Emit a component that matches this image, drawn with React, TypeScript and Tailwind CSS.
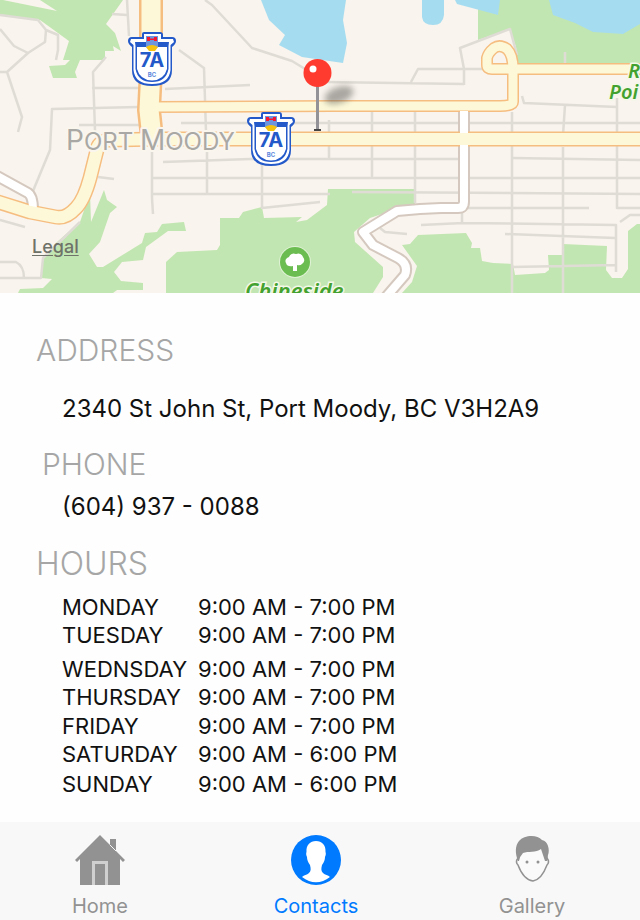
import React from 'react';

const land = '#f9f4ed';
const park = '#c2e6b1';
const water = '#a6dcf0';

function Shield({ x, y }: { x: number; y: number }) {
  const outline =
    'M14 2 Q14 0 16 0 H32 Q35 0 35 3 V5 H44 Q48 5 48 9 Q48 12 44 15 V38 Q44 54 24 54 Q4 54 4 38 V15 Q0 12 0 9 Q0 5 4 5 H14 Z';
  return (
    <g transform={`translate(${x} ${y})`}>
      <path d={outline} fill="#2359c9" />
      <path
        d="M16 2 H33 V7 H45 L46 10 L42.500 13 V38 Q41 52 24 52 Q7 52 5.500 38 V13 L2 10 L3 7 H16 Z"
        fill="#fff"
      />
      <path d="M7 10 H41 L40.500 14 V37 Q38 50 24 50 Q10 50 7.500 37 V14 Z" fill="#2359c9" />
      <path d="M9 15 H39 V37 Q36 48 24 48.500 Q12 48 9 37 Z" fill="#fff" />
      <path d="M18 4 H30 V15 Q24 21 18 15 Z" fill="#6d96df" />
      <path d="M19 5 H22 V9 H19 Z M26 5 H29 V9 H26 Z M22 6.500 H26 V8 H22 Z" fill="#f5162f" />
      <path d="M18 15 Q24 11 30 15 L27 19 H21 Z" fill="#f5c20f" />
      <text x="24" y="35" textAnchor="middle" fontSize="20" fontWeight="700" fill="#2359c9">
        7A
      </text>
      <text x="24" y="45" textAnchor="middle" fontSize="6" fontWeight="700" fill="#5d87dc">
        BC
      </text>
    </g>
  );
}

function CityMap() {
  const majorRoads = [
    'M151 -10 V70 L149 110 L152 138',
    'M154 107 L330 106 H500 Q513 106 513 102 V69',
    'M650 69 H492 Q487 69 487 65 V58 Q488 53 494 48 Q500 44 507 49 Q513 55 513 69',
    'M650 139 H160 L108 140 Q98 142 97 150 L90 178 Q84 200 76 208 Q66 219 56 217 L30 212 L-5 201',
  ];
  const widths = [24, 12, 12, 15];
  const fills = [19, 9, 9, 12];
  const whiteRoads = [
    'M464 111 V202 Q464 208 458 208 H441 L420 209 L397 211 L363 232 L373 245 L398 258 Q409 264 405 275 L386 297',
    'M-3 176 L28 193 Q33 196 33 210',
  ];
  return (
    <svg
      className="block h-[293px] w-full"
      viewBox="0 0 640 293"
      preserveAspectRatio="xMidYMid slice"
      fontFamily='Inter, "Liberation Sans", sans-serif'
      role="img"
      aria-label="Map of Port Moody"
    >
      <defs>
        <filter id="soft" x="-50%" y="-50%" width="200%" height="200%">
          <feGaussianBlur stdDeviation="3" />
        </filter>
      </defs>
      <rect width="640" height="293" fill={land} />
      <g fill={park}>
        <path d="M0 0 H3 L57 11 L40 0 H123 L106 24 L115 33 L121 51 L113 46 L114 51 L105 51 V60 H80 L75 72 L77 78 H53 L49 66 L65 65 L70 60 H63 L69 41 L40 20 L0 15 Z" />
        <path d="M90 193 L91 222 L104 190 L107 200 L117 207 L110 213 L100 242 L89 254 L97 267 H103 L142 243 L145 233 L157 232 L162 224 L184 222 L186 231 H168 L146 247 L143 260 L122 262 L114 272 L121 281 L143 283 V290 H117 L113 293 H18 L20 289 L43 288 L52 279 L41 278 L43 258 L57 242 L80 222 Z" />
        <path d="M166 293 V262 L177 252 L217 250 L220 245 V218 H239 L243 212 L262 207 L264 218 L302 217 L296 222 L307 220 L327 205 L328 189 H414 L415 205 L397 209 L370 218 L354 232 L355 242 L383 267 V277 L373 293 Z" />
        <path d="M402 245 L410 244 L418 235 L466 233 L472 243 L471 248 H480 L482 261 L493 263 L513 264 L515 275 L545 273 L549 270 L548 255 H562 L563 244 L607 246 L606 270 L612 278 H622 L628 269 V231 L637 224 H640 V293 H402 L412 282 L417 266 Z" />
        <path d="M478 0 V40 L510 29 L516 47 L518 66 H640 V0 Z" />
      </g>
      <g fill={water}>
        <path d="M261 0 L269 20 L285 35 L279 45 L302 57 L343 63 L347 43 L343 20 L346 0 Z" />
        <path d="M422 0 V17 Q423 25 433 25 Q443 25 444 15 V0 Z" />
        <path d="M455 0 L457 4 L498 15 L500 0 Z" />
        <path d="M549 0 L553 15 L575 23 L593 32 L623 34 L640 24 V0 Z" />
      </g>
      <g fill="none" stroke="#dfdcd5" strokeWidth="2.500" strokeLinejoin="round">
        <path d="M0 15 L38 20 L46 30 L45 42 L28 53 L7 72 L22 117 L18 132 M0 29 L14 46 L28 53 M0 72 H7 M46 30 L58 35 V50 L56 60" />
        <path d="M127 0 L129 36 M112 14 L127 15 M106 57 L93 72 L95 131 M92 88 H139 M138 107 L52 109 L50 150 L33 191 M79 125 H142" />
        <path d="M179 50 L204 68 L206 132 M165 89 L250 85 M181 123 H640 M205 0 L212 5 L252 48 L292 61 L310 72" />
        <path d="M325 82 L464 84 M411 82 L418 69 H487 M464 85 V69 L460 48 L510 29 L517 55 M565 52 V63" />
        <path d="M329 120 V158 M372 112 V177 M415 112 V203 M512 112 V293 M522 96 L524 103 L617 107 M565 105 L563 135 M617 98 L617 208 H640" />
        <path d="M152 150 V198 L153 214 M207 150 V194 M152 178 H640 M152 194 H330 M352 192 L640 194 M163 162 L250 159 H459 M512 158 L640 160" />
        <path d="M262 160 V208 L320 202 M468 208 H589 M421 225 L463 223 L616 225 V272 M505 234 L615 238 M512 267 L616 265 M563 147 V293 M462 208 V223 M620 222 L630 215 H640 M380 228 L385 232 L407 234" />
        <path d="M98 177 L114 179 M0 220 L25 227 M0 262 H16 Q24 266 24 278 M0 278 H41 L43 258 L80 222" />
      </g>
      <g fill="none" strokeLinejoin="round">
        <g stroke="#d5c9bf" strokeWidth="12">
          {whiteRoads.map((d) => (
            <path key={d} d={d} />
          ))}
        </g>
        <g stroke="#f6bd80">
          {majorRoads.map((d, i) => (
            <path key={d} d={d} strokeWidth={widths[i]} />
          ))}
        </g>
        <g stroke="#fff" strokeWidth="8">
          {whiteRoads.map((d) => (
            <path key={d} d={d} />
          ))}
        </g>
        <g stroke="#fdf9d8">
          {majorRoads.map((d, i) => (
            <path key={d} d={d} strokeWidth={fills[i]} />
          ))}
        </g>
      </g>
      <g fill="#a9a8a4" stroke="#faf6ee" strokeWidth="4" paintOrder="stroke" strokeLinejoin="round">
        <text x="66" y="150" fontSize="28">
          P<tspan fontSize="24">ORT </tspan>M<tspan fontSize="24">OODY</tspan>
        </text>
      </g>
      <Shield x={128} y={32} />
      <Shield x={247} y={112} />
      <ellipse cx="339" cy="95" rx="15" ry="8" fill="#5c5a57" opacity=".5" filter="url(#soft)" transform="rotate(-20 339 95)" />
      <path d="M317.500 84 V130" stroke="#929297" strokeWidth="3" />
      <path d="M314 130 H321" stroke="#444" strokeWidth="2" />
      <circle cx="317.500" cy="73" r="14" fill="#ff3b30" />
      <circle cx="313" cy="69" r="3.500" fill="#fff" />
      <circle cx="295" cy="262" r="16" fill="#e0f2d6" />
      <circle cx="295" cy="262" r="15" fill="#6cbd51" />
      <path
        d="M293 271 V266 Q287 267 286 263 Q284 259 289 257 Q291 252 296 254 Q301 252 303 257 Q306 261 302 264 Q300 266 297 265 V271 Z"
        fill="#fff"
      />
      <g
        fill="#43a22f"
        fontFamily='"Noto Sans", "Open Sans", sans-serif'
        fontStyle="italic"
        fontWeight="600"
        stroke="#f3f8e8"
        strokeWidth="3"
        paintOrder="stroke"
        fontSize="20"
      >
        <text x="245" y="299" fontSize="22">Chineside</text>
        <text x="628" y="78">R</text>
        <text x="609" y="99">Poi</text>
      </g>
    </svg>
  );
}

const hours = [
  { day: 'MONDAY', time: '9:00 AM - 7:00 PM', gap: '' },
  { day: 'TUESDAY', time: '9:00 AM - 7:00 PM', gap: '' },
  { day: 'WEDNSDAY', time: '9:00 AM - 7:00 PM', gap: 'pt-1.5' },
  { day: 'THURSDAY', time: '9:00 AM - 7:00 PM', gap: '' },
  { day: 'FRIDAY', time: '9:00 AM - 7:00 PM', gap: 'pt-px' },
  { day: 'SATURDAY', time: '9:00 AM - 6:00 PM', gap: '' },
  { day: 'SUNDAY', time: '9:00 AM - 6:00 PM', gap: 'pt-0.5' },
];

function HomeIcon() {
  return (
    <svg className="h-[52px] w-[52px]" viewBox="0 0 52 52" fill="#929292" aria-hidden="true">
      <path d="M26 1 L36 11 V5 H42 V17 L51 26 L49 28 L46 25 V51 H34 V27 H18 V51 H6 V25 L3 28 L1 26 Z" />
      <path d="M18 27 H34 V51 H18 Z" fill="#d0d0d0" />
      <path d="M21 30 H31 V51 H21 Z" />
      <path d="M36 11 L42 17" stroke="#f7f7f7" />
    </svg>
  );
}

function ContactsIcon() {
  return (
    <svg className="h-[52px] w-[52px]" viewBox="0 0 52 52" aria-hidden="true">
      <circle cx="26" cy="26" r="25" fill="#007aff" />
      <path
        d="M26 7 C20 7 16 11 16.500 18 C16 19 16 21 17 23 C17 26 18 28 20 31 C21 35 21 37 19 39 C17 41 14 41 12 43 C21 50 31 50 40 43 C38 41 35 41 33 39 C31 37 31 35 32 31 C34 28 35 26 35 23 C36 21 36 19 35.500 18 C36 11 32 7 26 7 Z"
        fill="#fff"
      />
    </svg>
  );
}

function GalleryIcon() {
  return (
    <svg className="h-[52px] w-[52px]" viewBox="0 0 52 52" aria-hidden="true">
      <path
        d="M12 24 Q9 28 12 31 C15 39 20 46 27 47 C33 46 38 39 41 31 Q44 28 41 24 L37 12 H15 Z"
        fill="#fafafa"
        stroke="#929292"
        strokeWidth="1.500"
      />
      <path
        d="M12 27 C9 19 9 12 13 7 C18 1 31 0 36 6 C42 7 44 16 42 21 L41 27 H39 L37 21 L35 15 C30 19 22 17 17 19 Q14 22 13 27 Z"
        fill="#929292"
      />
      <circle cx="21" cy="28" r="1.500" fill="#929292" />
      <circle cx="32" cy="28" r="1.500" fill="#929292" />
    </svg>
  );
}

const tabs = [
  { label: 'Home', icon: <HomeIcon />, color: 'text-[#929292]', active: false },
  { label: 'Contacts', icon: <ContactsIcon />, color: 'text-[#007aff]', active: true },
  { label: 'Gallery', icon: <GalleryIcon />, color: 'text-[#929292]', active: false },
];

export default function App() {
  return (
    <div className="flex min-h-screen flex-col overflow-hidden bg-[#fdfefd] font-[Inter,'Liberation_Sans',sans-serif] text-[#111]">
      <div className="relative">
        <CityMap />
        <a href="#legal" className="absolute bottom-8 left-8 text-lg font-medium text-[#6e7268] underline underline-offset-2">
          Legal
        </a>
      </div>
      <main className="flex-1 pb-5 pl-9">
        <section className="pt-9">
          <h2 className="text-[30px] leading-[42px] font-light text-[#a6a6a6]">ADDRESS</h2>
          <p className="pt-5 pl-[26px] text-2xl leading-[36px]">2340 St John St, Port Moody, BC V3H2A9</p>
        </section>
        <section className="pt-4">
          <h2 className="pl-1.5 text-[30px] leading-[42px] font-light text-[#a6a6a6]">PHONE</h2>
          <p className="pt-1 pl-[26px] text-2xl leading-[36px]">(604) 937 - 0088</p>
        </section>
        <section className="pt-[18px]">
          <h2 className="text-[32px] leading-[42px] font-light text-[#a6a6a6]">HOURS</h2>
          <table className="mt-2 ml-[26px] border-collapse text-[22px] leading-[28px]">
            <tbody>
              {hours.map(({ day, time, gap }) => (
                <tr key={day}>
                  <th scope="row" className={`w-[136px] p-0 text-left font-normal ${gap}`}>
                    {day}
                  </th>
                  <td className={`p-0 ${gap}`}>{time}</td>
                </tr>
              ))}
            </tbody>
          </table>
        </section>
      </main>
      <nav className="bg-[#f8f8f8] pt-3">
        <div className="-ml-2 grid grid-cols-3">
          {tabs.map(({ label, icon, color, active }) => (
            <button
              key={label}
              type="button"
              aria-current={active ? 'page' : undefined}
              className={`flex flex-col items-center gap-1.5 text-xl leading-[28px] ${color}`}
            >
              {icon}
              {label}
            </button>
          ))}
        </div>
      </nav>
    </div>
  );
}
